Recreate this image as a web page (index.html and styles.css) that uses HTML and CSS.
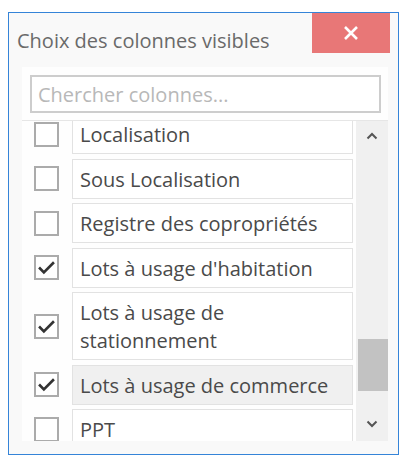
FILE: index.html
```html
<!DOCTYPE html>
<html lang="fr">
<head>
<meta charset="utf-8">
<title>Choix des colonnes visibles</title>
<link rel="stylesheet" href="styles.css">
</head>
<body>
<div class="window">
  <div class="header">
    <div class="title">Choix des colonnes visibles</div>
    <button class="close" aria-label="Fermer">
      <svg width="16" height="16" viewBox="0 0 16 16"><path d="M2 2 L14 14 M14 2 L2 14" stroke="#fff" stroke-width="2.6" fill="none"/></svg>
    </button>
  </div>
  <div class="panel">
    <div class="search"><input type="text" placeholder="Chercher colonnes..."></div>
    <div class="list">
      <div class="viewport">
        <div class="rows">
          <div class="row"><span class="check"></span><span class="label">Localisation</span></div>
          <div class="row"><span class="check"></span><span class="label">Sous Localisation</span></div>
          <div class="row"><span class="check"></span><span class="label">Registre des copropriétés</span></div>
          <div class="row"><span class="check on"><svg viewBox="0 0 24 24"><path d="M3.5 12 L9 17.5 L20.5 6" stroke="#333" stroke-width="3" fill="none"/></svg></span><span class="label">Lots à usage d'habitation</span></div>
          <div class="row"><span class="check on"><svg viewBox="0 0 24 24"><path d="M3.5 12 L9 17.5 L20.5 6" stroke="#333" stroke-width="3" fill="none"/></svg></span><span class="label two">Lots à usage de<br>stationnement</span></div>
          <div class="row"><span class="check on"><svg viewBox="0 0 24 24"><path d="M3.5 12 L9 17.5 L20.5 6" stroke="#333" stroke-width="3" fill="none"/></svg></span><span class="label hover">Lots à usage de commerce</span></div>
          <div class="row"><span class="check"></span><span class="label">PPT</span></div>
        </div>
      </div>
      <div class="scrollbar">
        <svg class="arrow" width="12" height="8" viewBox="0 0 12 8"><path d="M1.5 6.5 L6 2 L10.5 6.5" stroke="#555" stroke-width="2" fill="none"/></svg>
        <div class="thumb"></div>
        <svg class="arrow down" width="12" height="8" viewBox="0 0 12 8"><path d="M1.5 1.5 L6 6 L10.5 1.5" stroke="#555" stroke-width="2" fill="none"/></svg>
      </div>
    </div>
  </div>
</div>
</body>
</html>
```

FILE: styles.css
```css
html, body {
  margin: 0;
  padding: 0;
  background: #ffffff;
}
body {
  font-family: "Open Sans", "Noto Sans", sans-serif;
}
.window {
  box-sizing: border-box;
  margin: 12px 0 0 8px;
  width: 391px;
  height: 443px;
  border: 1.5px solid #3584d8;
  background: #f9f9f9;
  display: flex;
  flex-direction: column;
}
.header {
  display: flex;
  justify-content: space-between;
  align-items: flex-start;
  height: 54px;
  padding-left: 8px;
  padding-right: 8px;
}
.title {
  margin-top: 14px;
  font-size: 20px;
  color: #6a6a6a;
  line-height: 28px;
}
.close {
  width: 78px;
  height: 40px;
  border: none;
  padding: 0;
  background: #e87777;
  display: flex;
  align-items: center;
  justify-content: center;
}
.panel {
  margin: 0 10px 0 13px;
  background: #fefefe;
  padding: 8px 0 0 0;
  height: 374px;
  box-sizing: border-box;
  display: flex;
  flex-direction: column;
}
.search {
  padding: 0 7px 0 8px;
}
.search input {
  box-sizing: border-box;
  width: 100%;
  height: 38px;
  border: 2px solid #cdcdcd;
  background: #fff;
  font-family: "Open Sans", "Noto Sans", sans-serif;
  font-size: 20px;
  padding: 0 6px;
  color: #444;
  outline: none;
}
.search input::placeholder {
  color: #b8b8b8;
}
.list {
  margin-top: 7px;
  border-top: 1px solid #e6e6e6;
  flex: 1;
  display: flex;
  overflow: hidden;
}
.viewport {
  flex: 1;
  overflow: hidden;
}
.rows {
  margin-top: -7px;
  display: flex;
  flex-direction: column;
  gap: 4.5px;
}
.row {
  display: flex;
  align-items: center;
}
.check {
  box-sizing: border-box;
  width: 25px;
  height: 25px;
  border: 2px solid #ababab;
  background: #fff;
  margin: 0 13px 0 12px;
  flex: none;
  display: flex;
}
.check svg {
  width: 21px;
  height: 21px;
}
.label {
  box-sizing: border-box;
  flex: 1;
  min-height: 40px;
  margin-right: 3px;
  border: 1px solid #e2e2e2;
  background: #fff;
  padding: 6px 7px 4px;
  font-size: 20px;
  line-height: 28px;
  color: #4a4a4a;
}
.label.hover {
  background: #f0f0f0;
}
.scrollbar {
  width: 32px;
  background: #f0f0f0;
  display: flex;
  flex-direction: column;
  align-items: center;
  flex: none;
}
.arrow {
  margin-top: 11px;
}
.thumb {
  margin-top: 199px;
  width: 30px;
  margin-left: 2px;
  height: 52px;
  background: #c2c2c2;
}
.arrow.down {
  margin-top: 29px;
}
```
